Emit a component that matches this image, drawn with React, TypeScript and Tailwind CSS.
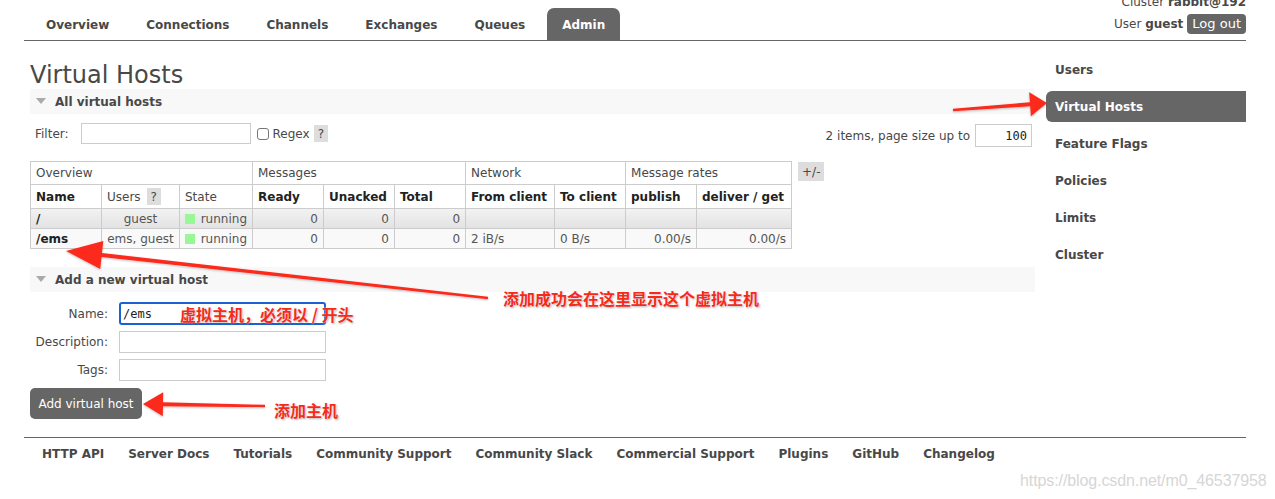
import React from "react";

type Pt = [number, number];

function arrowPoints(t: Pt, h: Pt, L: number, W: number, s: number): string {
  const dx = h[0] - t[0];
  const dy = h[1] - t[1];
  const len = Math.sqrt(dx * dx + dy * dy);
  const ux = dx / len;
  const uy = dy / len;
  const nx = -uy;
  const ny = ux;
  const bx = h[0] - ux * L;
  const by = h[1] - uy * L;
  const s0 = s * 0.6;
  const pts: Pt[] = [
    [t[0] + nx * s0, t[1] + ny * s0],
    [bx + nx * s, by + ny * s],
    [bx + nx * W, by + ny * W],
    [h[0], h[1]],
    [bx - nx * W, by - ny * W],
    [bx - nx * s, by - ny * s],
    [t[0] - nx * s0, t[1] - ny * s0],
  ];
  return pts.map((p) => `${p[0].toFixed(1)},${p[1].toFixed(1)}`).join(" ");
}

const navItems = ["Overview", "Connections", "Channels", "Exchanges", "Queues", "Admin"];
const sideItems = ["Users", "Virtual Hosts", "Feature Flags", "Policies", "Limits", "Cluster"];
const footerItems = [
  "HTTP API",
  "Server Docs",
  "Tutorials",
  "Community Support",
  "Community Slack",
  "Commercial Support",
  "Plugins",
  "GitHub",
  "Changelog",
];

function Help() {
  return <span className="inline-flex items-center justify-center bg-[#dddddd] text-[#484848] h-[17px] px-[4px] leading-none">?</span>;
}

function Running() {
  return (
    <div className="flex items-center gap-[6px]">
      <span className="inline-block w-[10px] h-[10px] bg-[#98f898]" />
      <span>running</span>
    </div>
  );
}

export default function App() {
  const cell = "border border-[#cccccc] px-[5px] whitespace-nowrap overflow-hidden";
  const redText =
    "absolute font-['Noto_Sans_CJK_SC',sans-serif] font-bold text-[16px] leading-[20px] text-[#f52a1b] whitespace-nowrap [text-shadow:0_0_2px_#fff,1px_1px_2px_rgba(0,0,0,0.35)]";
  return (
    <div className="relative w-[1275px] h-[499px] overflow-hidden bg-white text-[#484848] text-[12px] font-['DejaVu_Sans',Verdana,sans-serif]">
      {/* header */}
      <div className="ml-[24px] w-[1222px] h-[41px] flex justify-between border-b border-[#666666]">
        <div className="flex items-end pl-[7px] gap-[7px]">
          {navItems.map((n) => (
            <div
              key={n}
              className={
                "h-[32px] px-[15px] pt-[2px] flex items-center font-bold text-[12px] " +
                (n === "Admin" ? "bg-[#666666] text-white rounded-t-[7px]" : "text-[#484848]")
              }
            >
              {n}
            </div>
          ))}
        </div>
        <div className="flex flex-col items-end -mt-[6px]">
          <div className="h-[16px] leading-[16px]">
            Cluster <b>rabbit@192</b>
          </div>
          <div className="mt-[4px] h-[20px] flex items-center gap-[4px]">
            <span>
              User <b>guest</b>
            </span>
            <span className="h-[20px] px-[5px] flex items-center bg-[#666666] text-white rounded-[4px] text-[13px]">Log out</span>
          </div>
        </div>
      </div>

      {/* main */}
      <div className="flex ml-[30px]">
        <div className="w-[1005px]">
          <h1 className="mt-[20px] text-[24px] leading-[28px] text-[#484848]">Virtual Hosts</h1>
          <div className="h-[25px] bg-[#f8f8f8] flex items-center pl-[6px]">
            <svg width="10" height="7" viewBox="0 0 10 7" className="mr-[9px]">
              <polygon points="0,0 10,0 5,6" fill="#aaaaaa" />
            </svg>
            <span className="font-bold">All virtual hosts</span>
          </div>
          <div className="mt-[9px] h-[21px] flex justify-between items-start">
            <div className="flex items-center h-[21px]">
              <span className="ml-[5px]">Filter:</span>
              <div className="ml-[12px] w-[170px] h-[21px] border border-[#cccccc] bg-white" />
              <span className="ml-[6px] w-[12px] h-[12px] border border-[#777777] rounded-[3px] bg-white" />
              <span className="ml-[4px] mr-[4px]">Regex</span>
              <Help />
            </div>
            <div className="flex items-center mr-[3px] mt-[1px]">
              <span>2 items, page size up to</span>
              <div className="ml-[5px] w-[57px] h-[23px] border border-[#cccccc] flex items-center justify-end pr-[4px] font-['DejaVu_Sans_Mono',monospace] text-[12px] text-[#222]">
                100
              </div>
            </div>
          </div>

          <div className="mt-[17px] flex items-start">
            <table className="table-fixed border-collapse w-[761px] text-[12px]">
              <colgroup>
                <col className="w-[71px]" />
                <col className="w-[78px]" />
                <col className="w-[73px]" />
                <col className="w-[71px]" />
                <col className="w-[71px]" />
                <col className="w-[71px]" />
                <col className="w-[89px]" />
                <col className="w-[71px]" />
                <col className="w-[71px]" />
                <col className="w-[95px]" />
              </colgroup>
              <thead>
                <tr className="h-[23px] text-left">
                  <th colSpan={3} className={cell + " font-normal"}>Overview</th>
                  <th colSpan={3} className={cell + " font-normal"}>Messages</th>
                  <th colSpan={2} className={cell + " font-normal"}>Network</th>
                  <th colSpan={2} className={cell + " font-normal"}>Message rates</th>
                </tr>
                <tr className="h-[24px] text-left">
                  <th className={cell + " text-[#222] font-bold"}>Name</th>
                  <th className={cell + " font-normal"}>
                    <span className="inline-flex items-center gap-[6px]">
                      Users <Help />
                    </span>
                  </th>
                  <th className={cell + " font-normal"}>State</th>
                  <th className={cell + " text-[#222] font-bold"}>Ready</th>
                  <th className={cell + " text-[#222] font-bold"}>Unacked</th>
                  <th className={cell + " text-[#222] font-bold"}>Total</th>
                  <th className={cell + " text-[#222] font-bold"}>From client</th>
                  <th className={cell + " text-[#222] font-bold"}>To client</th>
                  <th className={cell + " text-[#222] font-bold"}>publish</th>
                  <th className={cell + " text-[#222] font-bold"}>deliver / get</th>
                </tr>
              </thead>
              <tbody className="text-[#555]">
                <tr className="h-[20px] bg-[linear-gradient(#f2f2f2,#e2e2e2)]">
                  <td className={cell + " font-bold text-[#222]"}>/</td>
                  <td className={cell + " text-center"}>guest</td>
                  <td className={cell}><Running /></td>
                  <td className={cell + " text-right"}>0</td>
                  <td className={cell + " text-right"}>0</td>
                  <td className={cell + " text-right"}>0</td>
                  <td className={cell}></td>
                  <td className={cell}></td>
                  <td className={cell}></td>
                  <td className={cell}></td>
                </tr>
                <tr className="h-[20px] bg-[#f9f9f9]">
                  <td className={cell + " font-bold text-[#222]"}>/ems</td>
                  <td className={cell + " text-center"}>ems, guest</td>
                  <td className={cell}><Running /></td>
                  <td className={cell + " text-right"}>0</td>
                  <td className={cell + " text-right"}>0</td>
                  <td className={cell + " text-right"}>0</td>
                  <td className={cell}>2 iB/s</td>
                  <td className={cell}>0 B/s</td>
                  <td className={cell + " text-right"}>0.00/s</td>
                  <td className={cell + " text-right"}>0.00/s</td>
                </tr>
              </tbody>
            </table>
            <span className="ml-[6px] mt-[1px] h-[19px] px-[4px] flex items-center bg-[#dddddd]">+/-</span>
          </div>

          <div className="mt-[18px] h-[25px] bg-[#f8f8f8] flex items-center pl-[6px]">
            <svg width="10" height="7" viewBox="0 0 10 7" className="mr-[9px]">
              <polygon points="0,0 10,0 5,6" fill="#aaaaaa" />
            </svg>
            <span className="font-bold text-[12px]">Add a new virtual host</span>
          </div>

          <div className="mt-[10px] flex items-center">
            <span className="w-[78px] text-right">Name:</span>
            <div className="ml-[11px] w-[207px] h-[23px] border-2 border-[#1a62d4] rounded-[3px] flex items-center pl-[2px] font-['DejaVu_Sans_Mono',monospace] text-[12px] text-[#222]">
              /ems
            </div>
          </div>
          <div className="mt-[6px] flex items-center">
            <span className="w-[78px] text-right">Description:</span>
            <div className="ml-[11px] w-[207px] h-[22px] border border-[#cccccc]" />
          </div>
          <div className="mt-[6px] flex items-center">
            <span className="w-[78px] text-right">Tags:</span>
            <div className="ml-[11px] w-[207px] h-[22px] border border-[#cccccc]" />
          </div>
          <div className="mt-[7px] w-[112px] h-[31px] bg-[#666666] rounded-[5px] text-white text-[12px] flex items-center justify-center">
            Add virtual host
          </div>
        </div>

        <div className="ml-[11px] w-[200px] mt-[13px] flex flex-col gap-[6px]">
          {sideItems.map((s) => (
            <div
              key={s}
              className={
                "h-[31px] pl-[9px] flex items-center font-bold " +
                (s === "Virtual Hosts" ? "bg-[#666666] text-white rounded-l-[6px]" : "text-[#484848]")
              }
            >
              {s}
            </div>
          ))}
        </div>
      </div>

      {/* footer */}
      <div className="mt-[18px] ml-[24px] w-[1222px] border-t border-[#666666]">
        <div className="flex pl-[18px] pt-[8px] gap-[24px] font-bold leading-[16px]">
          {footerItems.map((f) => (
            <span key={f}>{f}</span>
          ))}
        </div>
      </div>

      {/* watermark */}
      <div className="absolute left-[1020px] top-[472px] font-['Liberation_Sans',Arial,sans-serif] text-[16px] leading-[18px] text-[#d6d6d6] tracking-[-0.1px] whitespace-nowrap">
        https://blog.csdn.net/m0_46537958
      </div>

      {/* annotations */}
      <svg className="absolute left-0 top-0 pointer-events-none" width="1275" height="499">
        <defs>
          <filter id="sh" x="-10%" y="-50%" width="120%" height="200%">
            <feDropShadow dx="0" dy="1" stdDeviation="1" floodColor="#000" floodOpacity="0.25" />
          </filter>
        </defs>
        <g fill="#fb2b1c" filter="url(#sh)">
          <polygon points={arrowPoints([953, 110], [1047, 103], 17, 12, 2)} />
          <polygon points={arrowPoints([488, 298], [66, 251], 36, 14, 2)} />
          <polygon points={arrowPoints([265, 406], [143, 404], 20, 12, 2)} />
        </g>
      </svg>
      <div className={redText + " left-[503px] top-[288px] text-[15.7px]"}>添加成功会在这里显示这个虚拟主机</div>
      <div className={redText + " left-[180px] top-[304px]"}>虚拟主机，必须以 / 开头</div>
      <div className={redText + " left-[274px] top-[400px]"}>添加主机</div>
    </div>
  );
}
